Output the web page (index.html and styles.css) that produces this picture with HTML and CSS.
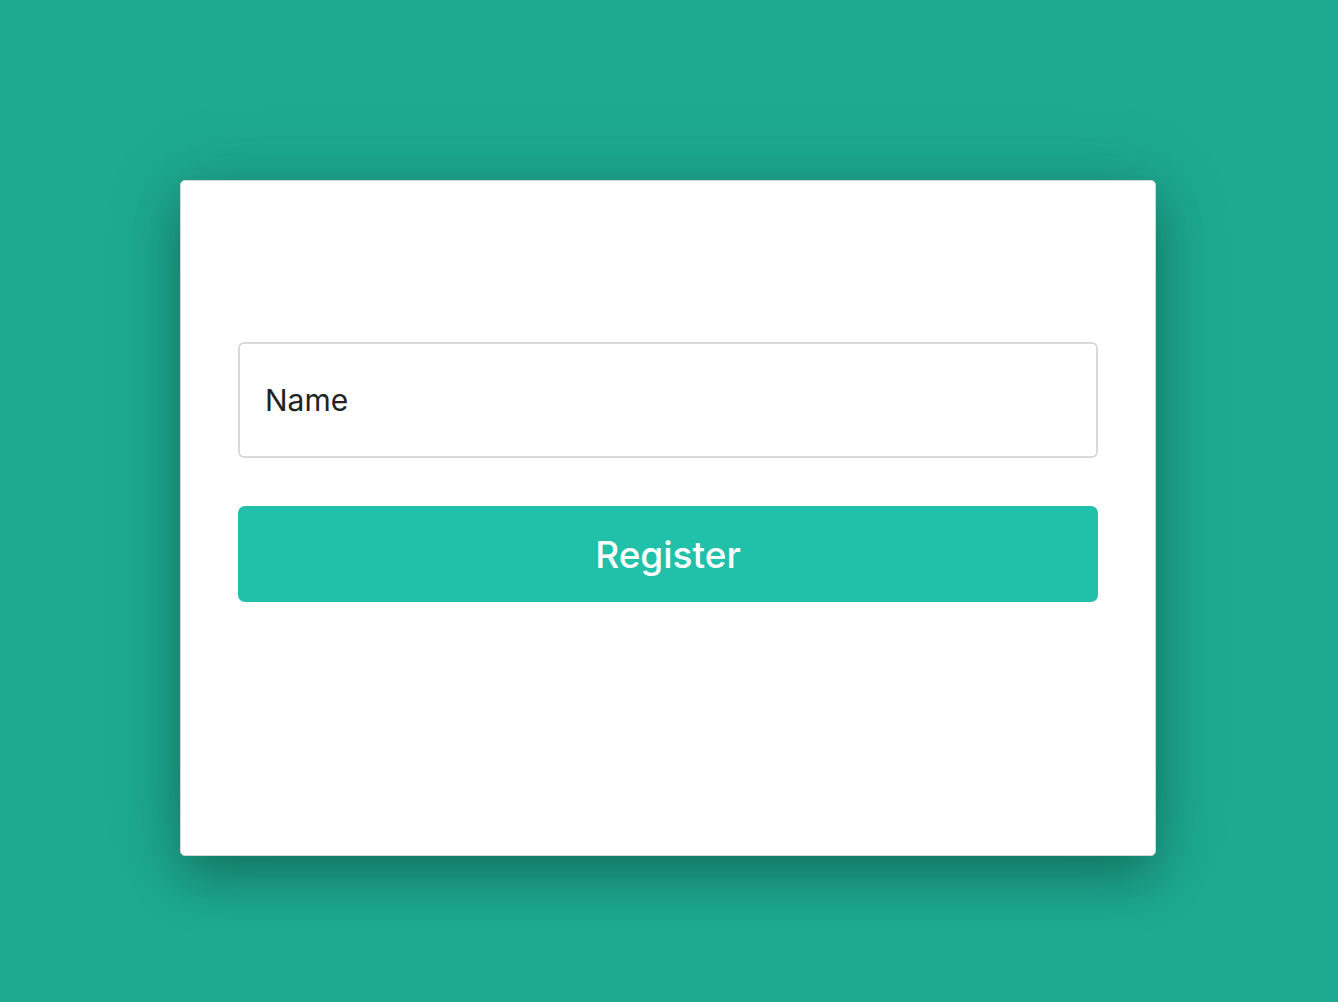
FILE: index.html
```html
<!DOCTYPE html>
<html lang="en">
<head>
<meta charset="utf-8">
<title>Register</title>
<link rel="stylesheet" href="styles.css">
</head>
<body>
<main class="page">
  <form class="card">
    <input class="field" type="text" placeholder="Name">
    <button class="btn" type="button">Register</button>
  </form>
</main>
</body>
</html>
```

FILE: styles.css
```css
html, body {
  margin: 0;
  padding: 0;
  height: 100%;
}
body {
  background: #1eaa92;
  font-family: Inter, "Noto Sans", sans-serif;
}
.page {
  display: flex;
  justify-content: center;
  padding-top: 180px;
  padding-right: 2px;
}
.card {
  box-sizing: border-box;
  width: 976px;
  height: 676px;
  background: #fff;
  border: 1px solid #d6d6d6;
  border-radius: 5px;
  box-shadow: 0 22px 50px rgba(0, 40, 30, 0.35), 0 0 80px rgba(0, 40, 30, 0.15);
  padding: 161px 57px 0;
  display: flex;
  flex-direction: column;
  gap: 48px;
}
.field {
  box-sizing: border-box;
  width: 860px;
  height: 116px;
  border: 2px solid #d9d9d9;
  border-radius: 6px;
  padding: 0 25px;
  font-family: Inter, "Noto Sans", sans-serif;
  font-size: 30px;
  color: #222;
  outline: none;
  background: #fff;
}
.field::placeholder {
  color: #222;
  opacity: 1;
}
.btn {
  box-sizing: border-box;
  width: 860px;
  height: 96px;
  border: none;
  border-radius: 7px;
  background: #20c1a8;
  color: #fff;
  font-family: Inter, "Noto Sans", sans-serif;
  font-size: 37px;
  font-weight: 500;
  cursor: pointer;
}
```
